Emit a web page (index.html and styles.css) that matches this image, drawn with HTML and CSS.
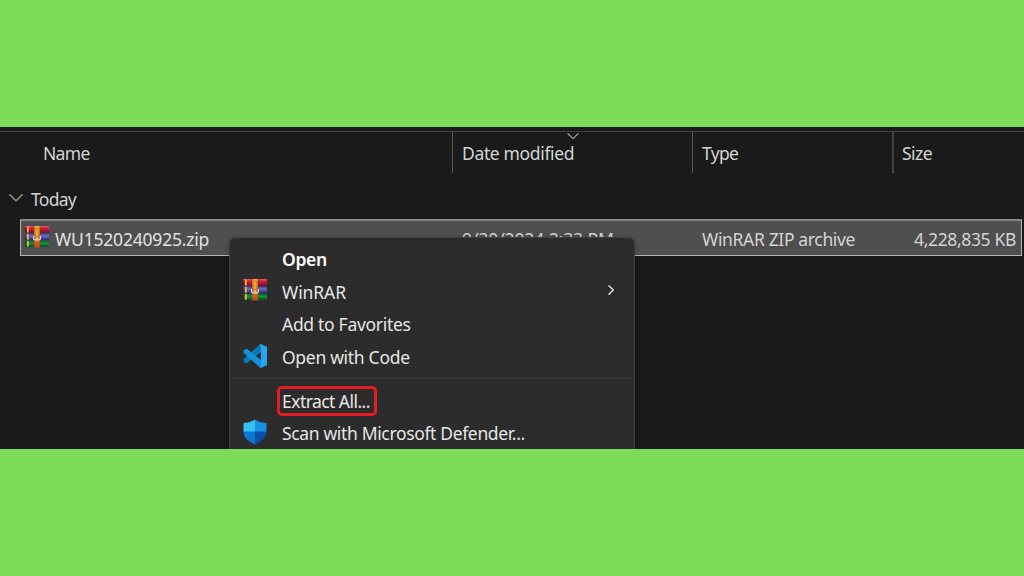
FILE: index.html
```
<!DOCTYPE html>
<html lang="en">
	<head>
		<meta charset="utf-8">
		<title>Extract All</title>
		<link rel="stylesheet" href="styles.css">
	</head>
	<body>
		<!-- shared archive icon -->
		<svg class="defs" width="0" height="0">
			<defs>
				<linearGradient id="red" x1="0" y1="0" x2="0" y2="1"><stop offset="0" stop-color="#e0607a"/><stop offset=".35" stop-color="#d0193f"/><stop offset="1" stop-color="#70132b"/></linearGradient>
				<linearGradient id="blue" x1="0" y1="0" x2="0" y2="1"><stop offset="0" stop-color="#3c3d91"/><stop offset=".4" stop-color="#6a6ccb"/><stop offset="1" stop-color="#27276b"/></linearGradient>
				<linearGradient id="green" x1="0" y1="0" x2="0" y2="1"><stop offset="0" stop-color="#0c5a2c"/><stop offset=".45" stop-color="#149447"/><stop offset="1" stop-color="#064c20"/></linearGradient>
				<linearGradient id="belt" x1="0" y1="0" x2="0" y2="1"><stop offset="0" stop-color="#f0b02c"/><stop offset=".45" stop-color="#d98a2a"/><stop offset="1" stop-color="#bf4a10"/></linearGradient>
				<symbol id="archive" viewBox="0 0 24 22">
					<rect width="24" height="7" rx=".6" fill="url(#red)"/>
					<rect y="7.3" width="24" height="6.8" rx=".6" fill="url(#blue)"/>
					<rect y="14.5" width="24" height="6.5" rx=".6" fill="url(#green)"/>
					<path d="M2.9 1.4v4.4M2.9 8.6v4.4M2.9 15.6v4.2" stroke="#f3b51f" stroke-width="1.8"/>
					<path d="M.6 1.5v4M.6 9v4M.6 16v4" stroke="#351b3a" stroke-width=".8"/>
					<rect x="9" width="6" height="21.5" fill="url(#belt)"/>
					<path d="M9 0v21.5M15 0v21.5" stroke="#76411f" stroke-width=".7"/>
					<rect x="10.2" y="2" width="3.6" height="8.5" rx="1.4" fill="#f0a52a" stroke="#b86816" stroke-width=".7"/>
					<path d="M8.6 10.500v2q0 1.300 1.400 1.300h4q1.400 0 1.400-1.300v-2M12 11.500v2" fill="none" stroke="#ddd3cc" stroke-width="1.300"/>
				</symbol>
			</defs>
		</svg>

		<div class="explorer">
			<div class="header">
				<div class="col name">Name</div>
				<div class="col date">Date modified
					<svg class="sort" width="12" height="7" viewBox="0 0 12 7"><path d="M1 .8l5 4.9L11 .8"/></svg>
				</div>
				<div class="col type">Type</div>
				<div class="col size">Size</div>
			</div>

			<div class="group">
				<svg width="14" height="8" viewBox="0 0 14 8"><path d="M.8 .8L7 6.8l6.2-6"/></svg>
				<span>Today</span>
			</div>

			<div class="file">
				<svg class="icon"><use href="#archive"/></svg>
				<span class="file-name">WU1520240925.zip</span>
				<span class="file-date">9/30/2024 2:33 PM</span>
				<span class="file-type">WinRAR ZIP archive</span>
				<span class="file-size">4,228,835 KB</span>
			</div>

			<div class="menu">
				<div class="item open"><span class="label">Open</span></div>
				<div class="item winrar">
					<svg class="icon"><use href="#archive"/></svg>
					<span class="label">WinRAR</span>
					<svg class="arrow" width="7" height="12" viewBox="0 0 7 12"><path d="M1 1.8L5.2 6 1 10.2"/></svg>
				</div>
				<div class="item favorites"><span class="label">Add to Favorites</span></div>
				<div class="item code">
					<svg class="icon" viewBox="0 0 24 24">
						<path d="M17.5 0L.5 15.2v2.2l2 1.6 1.6-.1L18 8z" fill="#0879bd"/>
						<path d="M17.5 24L.5 8.8V6.6L2.5 5l1.6.1L18 16z" fill="#1690d8"/>
						<path d="M17.5 0L24 2.8v18.4L17.5 24l-1-1 1.3-1.5v-19L16.500 1z" fill="#27a5ee"/>
					</svg>
					<span class="label">Open with Code</span>
				</div>
				<div class="line"></div>
				<div class="item extract"><span class="label">Extract All...</span></div>
				<div class="item defender">
					<svg class="icon" viewBox="0 0 24 26">
						<path d="M12 .5C8.500 3 5 3.800 .5 4v9H12z" fill="#35c0f0"/>
						<path d="M12 .5c3.500 2.500 7 3.300 11.500 3.500v9H12z" fill="#1492df"/>
						<path d="M.5 12.500H12v13C5.500 22.500 .5 18.500 .5 12.500z" fill="#0c78d4"/>
						<path d="M23.500 12.500H12v13c6.500-3 11.500-7 11.500-13z" fill="#114fa5"/>
					</svg>
					<span class="label">Scan with Microsoft Defender...</span>
				</div>
			</div>
		</div>
	</body>
</html>
```
FILE: styles.css
```
body {
    margin: 0;
    height: 576px;
    padding-top: 127px;
    box-sizing: border-box;
    overflow: hidden;
    background: #7eda59;
    font-family: "Noto Sans", "Open Sans", sans-serif;
    font-size: 17.5px;
    letter-spacing: -0.35px;
    color: #d4d4d4;
}

svg {
    display: block;
    flex: none;
}

path {
    stroke-linecap: round;
}

.defs {
    position: absolute;
}

.explorer {
    position: relative;
    box-sizing: border-box;
    height: 322px;
    padding-top: 4px;
    overflow: hidden;
    background: #1a1a1a;
    white-space: nowrap;
}

.header {
    display: flex;
    height: 41px;
    border-top: 1px solid #414141;
    line-height: 43px;
}

.col {
    box-sizing: border-box;
    padding-left: 9px;
    border-left: 1px solid #5b5b5b;
}

.name {
    width: 452px;
    padding-left: 43px;
    border-left: 0;
    letter-spacing: -0.7px;
}

.date {
    position: relative;
    width: 240px;
}

.type {
    width: 200px;
    letter-spacing: -0.7px;
}

.size {
    width: 132px;
    border-left: 2px solid #444;
    padding-left: 8px;
    letter-spacing: -0.5px;
}

.sort {
    position: absolute;
    left: 114px;
    top: 1px;
}

.sort path, .group path {
    fill: none;
    stroke: #999;
    stroke-width: 1.3;
}

.group {
    display: flex;
    align-items: center;
    gap: 7px;
    height: 46px;
    padding: 4px 0 0 9px;
    box-sizing: border-box;
    letter-spacing: -0.7px;
}

.group span {
    padding: 1px 0 0 1px;
}

.file {
    display: flex;
    align-items: center;
    box-sizing: border-box;
    width: 1002px;
    height: 37px;
    margin-left: 20px;
    padding: 1px 5px 0 4px;
    border: 1px solid #b5b5b5;
    border-top: 2px solid #858585;
    background: #4f4f4f;
}

.icon {
    width: 24px;
    height: 22px;
    flex: none;
}

.file .icon {
    margin-bottom: 3px;
}

.file-name {
    width: 407px;
    margin-left: 6px;
    color: #e2e2e2;
    letter-spacing: -0.2px;
}

.file-date {
    width: 240px;
    letter-spacing: -0.1px;
}

.file-type {
    flex: 1;
}

.menu {
    position: absolute;
    left: 229px;
    top: 110px;
    box-sizing: border-box;
    width: 406px;
    height: 240px;
    padding-top: 5px;
    border: 1px solid #414141;
    border-radius: 6px;
    background: #2c2c2c;
    box-shadow: 0 1px 5px rgba(0, 0, 0, 0.3);
    color: #e6e6e6;
}

.item {
    display: grid;
    grid-template-columns: 24px 1fr 7px;
    column-gap: 15px;
    align-items: center;
    height: 32.6px;
    padding: 0 19px 0 13px;
}

.label {
    grid-column: 2;
    justify-self: start;
}

.open {
    font-weight: 600;
    color: #fff;
}

.winrar {
    letter-spacing: -0.1px;
}

.winrar .icon {
    margin-bottom: 4px;
}

.arrow {
    margin-bottom: 4px;
}

.arrow path {
    fill: none;
    stroke: #ddd;
    stroke-width: 1.5;
}

.favorites, .code {
    letter-spacing: -0.3px;
}

.code .icon {
    height: 24px;
    margin-bottom: 2px;
}

.defender .icon {
    height: 26px;
    margin-bottom: 3px;
}

.line {
    height: 1px;
    margin: 5px 4px 5px;
    background: #3c3c3c;
}

.extract .label {
    box-sizing: border-box;
    width: 100px;
    height: 30px;
    margin-left: -5px;
    padding-left: 2px;
    border: 3px solid #e51c23;
    border-radius: 5px;
    line-height: 24px;
    letter-spacing: -0.55px;
}
```
